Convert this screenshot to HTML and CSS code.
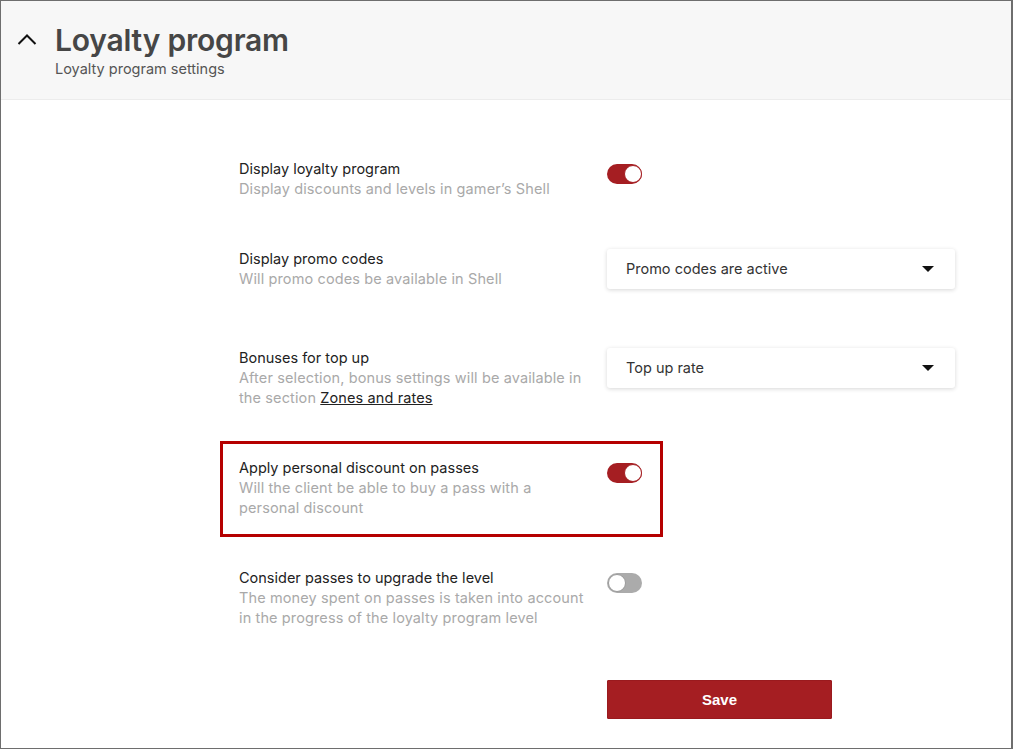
FILE: index.html
```html
<!DOCTYPE html>
<html lang="en">
<head>
<meta charset="utf-8">
<title>Loyalty program</title>
<link rel="stylesheet" href="styles.css">
</head>
<body>
<div class="page">
  <header class="header">
    <svg class="chevron" width="20" height="12" viewBox="0 0 20 12"><polyline points="1.5,11 10,2.5 18.5,11" fill="none" stroke="#111" stroke-width="2"/></svg>
    <div class="header-text">
      <h1 class="title">Loyalty program</h1>
      <div class="subtitle">Loyalty program settings</div>
    </div>
  </header>
  <main class="content">
    <div class="row">
      <div class="label">
        <div class="label-title">Display loyalty program</div>
        <div class="label-desc">Display discounts and levels in gamer’s Shell</div>
      </div>
      <div class="control"><span class="toggle on"><span class="knob"></span></span></div>
    </div>
    <div class="row row-select">
      <div class="label">
        <div class="label-title">Display promo codes</div>
        <div class="label-desc">Will promo codes be available in Shell</div>
      </div>
      <div class="control"><div class="select"><span>Promo codes are active</span><span class="caret"></span></div></div>
    </div>
    <div class="row">
      <div class="label">
        <div class="label-title">Bonuses for top up</div>
        <div class="label-desc">After selection, bonus settings will be available in the section <a class="link" href="#">Zones and rates</a></div>
      </div>
      <div class="control"><div class="select"><span>Top up rate</span><span class="caret"></span></div></div>
    </div>
    <div class="row highlighted">
      <div class="label">
        <div class="label-title">Apply personal discount on passes</div>
        <div class="label-desc">Will the client be able to buy a pass with a personal discount</div>
      </div>
      <div class="control"><span class="toggle on"><span class="knob"></span></span></div>
    </div>
    <div class="row">
      <div class="label">
        <div class="label-title">Consider passes to upgrade the level</div>
        <div class="label-desc">The money spent on passes is taken into account in the progress of the loyalty program level</div>
      </div>
      <div class="control"><span class="toggle"><span class="knob"></span></span></div>
    </div>
    <div class="actions">
      <button class="save">Save</button>
    </div>
  </main>
</div>
</body>
</html>
```

FILE: styles.css
```css
*, *::before, *::after { box-sizing: border-box; }
html, body { margin: 0; padding: 0; background: #fff; }
body { font-family: Inter, "Noto Sans", sans-serif; }
.page {
  width: 1013px;
  height: 749px;
  border: 1px solid #6e6e6e;
  border-right-width: 2px;
  overflow: hidden;
}
.header {
  height: 99px;
  background: #f7f7f7;
  border-bottom: 1px solid #ececec;
  display: flex;
  align-items: flex-start;
  padding: 21px 0 0 16px;
}
.chevron { margin-top: 11px; margin-right: 18px; }
.title {
  margin: 0;
  font-size: 30px;
  font-weight: 600;
  color: #464646;
  line-height: 36px;
  letter-spacing: -0.2px;
}
.subtitle {
  font-size: 14.5px;
  color: #555;
  line-height: 20px;
  margin-top: 1px;
}
.content {
  padding: 59px 0 0 238px;
  display: flex;
  flex-direction: column;
  gap: 50px;
  width: 955px;
}
.row {
  display: grid;
  grid-template-columns: 350px 348px;
  column-gap: 18px;
  align-items: start;
  position: relative;
}
.row-select { margin-bottom: 9px; }
.label-title {
  font-size: 14.5px;
  line-height: 20px;
  color: #222;
}
.label-desc {
  font-size: 14.5px;
  line-height: 20px;
  color: #a9a9a9;
  letter-spacing: 0.12px;
}
.link { color: #222; text-decoration: underline; }
.control { display: flex; }
.toggle {
  width: 35px;
  height: 20px;
  border-radius: 10px;
  background: #ababab;
  position: relative;
  margin-top: 5px;
  display: inline-block;
}
.toggle .knob {
  position: absolute;
  top: 1px;
  left: 1px;
  width: 18px;
  height: 18px;
  border-radius: 50%;
  background: #fff;
  border: 1px solid #9a9a9a;
}
.toggle.on { background: #a51e22; }
.toggle.on .knob { left: auto; right: 0; top: 1px; border-color: #a51e22; }
.select {
  width: 348px;
  height: 40px;
  background: #fff;
  border-radius: 3px;
  box-shadow: 0 1px 4px rgba(0,0,0,0.16);
  display: flex;
  align-items: center;
  justify-content: space-between;
  padding: 0 21px 1px 19px;
  font-size: 14.5px;
  color: #333;
}
.caret {
  width: 0; height: 0;
  border-left: 6px solid transparent;
  border-right: 6px solid transparent;
  border-top: 6px solid #111;
}
.highlighted::before {
  content: "";
  position: absolute;
  left: -19px;
  top: -17px;
  width: 443px;
  height: 96px;
  border: 3px solid #b50000;
  pointer-events: none;
}
.actions {
  padding-left: 368px;
  margin-top: 2px;
}
.save {
  width: 225px;
  height: 39px;
  background: #a51e22;
  border: 1px solid #9a1a1e;
  color: #fff;
  font-family: "Liberation Sans", Arial, sans-serif;
  font-weight: 700;
  font-size: 15px;
  border-radius: 1px;
  padding: 0 0 1px;
}
```
